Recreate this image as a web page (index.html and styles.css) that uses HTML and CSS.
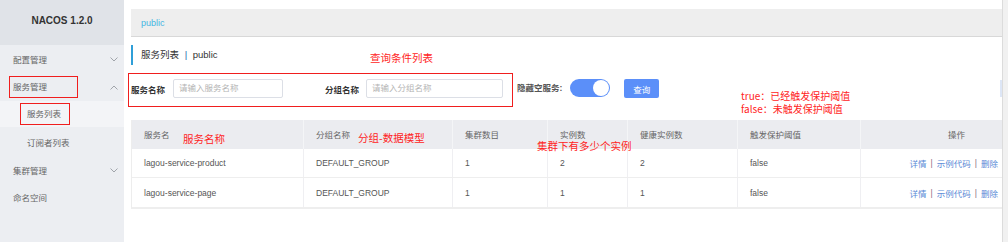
FILE: index.html
```html
<!DOCTYPE html>
<html lang="zh-CN">
<head>
<meta charset="utf-8">
<title>NACOS 1.2.0</title>
<link rel="stylesheet" href="styles.css">
</head>
<body>
<aside class="sidebar">
  <div class="logo">NACOS 1.2.0</div>
  <nav class="menu">
    <div class="item item-a">
      <span>配置管理</span>
      <svg class="chev" width="8" height="5" viewBox="0 0 8 5"><polyline points="0.5,0.5 4,4 7.5,0.5" fill="none" stroke="#a0a4aa" stroke-width="1"/></svg>
    </div>
    <div class="item item-b">
      <span class="mark mark-group">服务管理</span>
      <svg class="chev" width="8" height="5" viewBox="0 0 8 5"><polyline points="0.5,4.5 4,1 7.5,4.5" fill="none" stroke="#a0a4aa" stroke-width="1"/></svg>
    </div>
    <div class="item sub active item-c">
      <span class="mark mark-sub">服务列表</span>
    </div>
    <div class="item sub item-d">
      <span>订阅者列表</span>
    </div>
    <div class="item item-e">
      <span>集群管理</span>
      <svg class="chev" width="8" height="5" viewBox="0 0 8 5"><polyline points="0.5,0.5 4,4 7.5,0.5" fill="none" stroke="#a0a4aa" stroke-width="1"/></svg>
    </div>
    <div class="item item-f">
      <span>命名空间</span>
    </div>
  </nav>
</aside>

<main class="main">
  <div class="ns-bar"><span class="ns">public</span></div>

  <div class="page-title">服务列表 <span class="sep">|</span> public</div>

  <div class="filters">
    <div class="filter-box">
      <label class="flabel">服务名称</label>
      <div class="input w1">请输入服务名称</div>
      <label class="flabel gap">分组名称</label>
      <div class="input w2">请输入分组名称</div>
    </div>
    <span class="hide-label">隐藏空服务:</span>
    <span class="switch"><span class="knob"></span></span>
    <button class="btn">查询</button>
    <span class="edge"></span>
  </div>

  <div class="table">
    <div class="row head">
      <div class="cell">服务名</div>
      <div class="cell">分组名称</div>
      <div class="cell">集群数目</div>
      <div class="cell">实例数</div>
      <div class="cell">健康实例数</div>
      <div class="cell">触发保护阈值</div>
      <div class="cell op-head">操作</div>
    </div>
    <div class="row">
      <div class="cell">lagou-service-product</div>
      <div class="cell">DEFAULT_GROUP</div>
      <div class="cell">1</div>
      <div class="cell">2</div>
      <div class="cell">2</div>
      <div class="cell">false</div>
      <div class="cell ops"><a>详情</a><i>|</i><a>示例代码</a><i>|</i><a>删除</a></div>
    </div>
    <div class="row">
      <div class="cell">lagou-service-page</div>
      <div class="cell">DEFAULT_GROUP</div>
      <div class="cell">1</div>
      <div class="cell">1</div>
      <div class="cell">1</div>
      <div class="cell">false</div>
      <div class="cell ops"><a>详情</a><i>|</i><a>示例代码</a><i>|</i><a>删除</a></div>
    </div>
  </div>

  <div class="note note-query">查询条件列表</div>
  <div class="note note-protect">true：已经触发保护阈值<br>false：未触发保护阈值</div>
  <div class="note note-name">服务名称</div>
  <div class="note note-group">分组-数据模型</div>
  <div class="note note-inst">集群下有多少个实例</div>
</main>

<div class="scrollbar"></div>
</body>
</html>
```

FILE: styles.css
```css
html, body {
  margin: 0;
  padding: 0;
}

body {
  display: flex;
  width: 1008px;
  height: 242px;
  overflow: hidden;
  background: #ffffff;
  font-family: "Liberation Sans", "Noto Sans CJK SC", sans-serif;
  font-size: 8.5px;
  color: #555;
}

/* ---------- sidebar ---------- */
.sidebar {
  width: 124px;
  flex: none;
  background: #eceef2;
}

.logo {
  height: 45px;
  background: #e0e3e8;
  display: flex;
  align-items: center;
  justify-content: center;
  font-family: "Liberation Sans", sans-serif;
  font-weight: bold;
  font-size: 10px;
  color: #333;
  padding-bottom: 4px;
  box-sizing: border-box;
}

.menu {
  display: flex;
  flex-direction: column;
}

.item {
  display: flex;
  align-items: center;
  height: 28px;
  padding-left: 13px;
  padding-right: 6px;
  color: #666;
  box-sizing: border-box;
}

.item .chev {
  margin-left: auto;
}

.item-c { height: 26px; }
.item-d { height: 30px; }
.item-e { height: 26px; }

.item.sub {
  padding-left: 27px;
}

.item.active {
  background: #f3f4f7;
}

.mark {
  border: 1px solid #f01e1e;
  line-height: 20px;
}

.mark-group {
  margin-left: -4px;
  padding: 0 30px 0 3px;
}

.mark-sub {
  margin-left: -7px;
  padding: 0 8px 0 6px;
}

/* ---------- main ---------- */
.main {
  flex: 1;
  position: relative;
  padding: 9px 0 0 7px;
  min-width: 0;
}

.ns-bar {
  height: 28px;
  background: #eeeeee;
  border-bottom: 1px solid #d8d8d8;
  box-sizing: border-box;
  display: flex;
  align-items: center;
  padding-left: 10px;
}

.ns {
  color: #45b5e2;
  font-size: 9px;
}

.page-title {
  margin-top: 8px;
  height: 20px;
  line-height: 20px;
  border-left: 2px solid #2f9fd8;
  padding-left: 8px;
  font-size: 9.5px;
  color: #333;
}

.page-title .sep {
  color: #2b5fa8;
  margin: 0 3px;
}

.filters {
  display: flex;
  align-items: flex-start;
  margin-top: 8px;
  height: 34px;
}

.filter-box {
  display: flex;
  align-items: center;
  margin-left: -3px;
  border: 1px solid #f01e1e;
  padding: 5px 9px 8px 2px;
  height: 34px;
  box-sizing: border-box;
}

.flabel {
  color: #333;
  font-weight: bold;
  width: 34px;
  white-space: nowrap;
}

.flabel.gap {
  margin-left: 42px;
}

.input {
  margin-left: 8px;
  height: 19px;
  line-height: 17px;
  border: 1px solid #dcdfe6;
  border-radius: 2px;
  box-sizing: border-box;
  padding-left: 5px;
  color: #b4b4b4;
}

.input.w1 { width: 110px; }
.input.w2 { width: 137px; }
.flabel.gap + .input { margin-left: 7px; }

.hide-label {
  margin-left: 4px;
  margin-top: 6px;
  line-height: 19px;
  color: #555;
  font-weight: bold;
}

.switch {
  margin-left: 8px;
  margin-top: 6px;
  width: 40px;
  height: 18px;
  border-radius: 9px;
  background: #5b8ff9;
  display: flex;
  align-items: center;
  justify-content: flex-end;
  padding-right: 1px;
  box-sizing: border-box;
}

.knob {
  width: 16px;
  height: 16px;
  border-radius: 50%;
  background: #ffffff;
}

.btn {
  margin-left: 14px;
  margin-top: 6px;
  width: 35px;
  height: 19px;
  border: none;
  border-radius: 2px;
  background: #5b8ff9;
  color: #ffffff;
  font-family: "Noto Sans CJK SC", sans-serif;
  font-size: 8.5px;
  padding: 0;
}

.edge {
  margin-left: auto;
  margin-top: 7px;
  width: 2px;
  height: 17px;
  background: #dde6f6;
}

/* ---------- table ---------- */
.table {
  margin-top: 13px;
  width: 871px;
  border-left: 1px solid #ededed;
  border-bottom: 2px solid #eeeeee;
  box-sizing: border-box;
}

.row {
  display: grid;
  grid-template-columns: 172px 149px 95px 80px 110px 123px 141px;
  height: 29px;
  border-bottom: 1px solid #eeeeee;
  box-sizing: border-box;
}

.row:last-child {
  border-bottom: none;
}

.row.head {
  background: #ebecf0;
  border-bottom: none;
  color: #666;
}

.cell {
  display: flex;
  align-items: center;
  padding-left: 12px;
  border-right: 1px solid #efeff2;
  white-space: nowrap;
  overflow: hidden;
}

.row.head .cell {
  border-right-color: #f4f5f7;
  padding-bottom: 2px;
}

.cell:last-child {
  border-right: none;
}

.op-head {
  justify-content: center;
  padding-left: 50px;
}

.ops {
  justify-content: flex-end;
  padding-right: 4px;
}

.ops a {
  color: #5a8ad6;
}

.ops i {
  font-style: normal;
  color: #8c6a80;
  margin: 0 4px;
}

/* ---------- annotations ---------- */
.note {
  position: absolute;
  color: #ff2424;
  font-family: "Noto Sans CJK SC", sans-serif;
  font-size: 10.5px;
  line-height: 14px;
  white-space: nowrap;
}

.note-query { left: 246px; top: 51px; }
.note-protect { left: 617px; top: 89px; font-size: 10px; line-height: 13px; }
.note-name { left: 59px; top: 132px; }
.note-group { left: 234px; top: 131px; }
.note-inst { left: 413px; top: 139px; }

/* ---------- scrollbar ---------- */
.scrollbar {
  width: 6px;
  flex: none;
  background: #f1f1f1;
  border-left: 1px solid #dcdcdc;
  box-sizing: border-box;
}
```
